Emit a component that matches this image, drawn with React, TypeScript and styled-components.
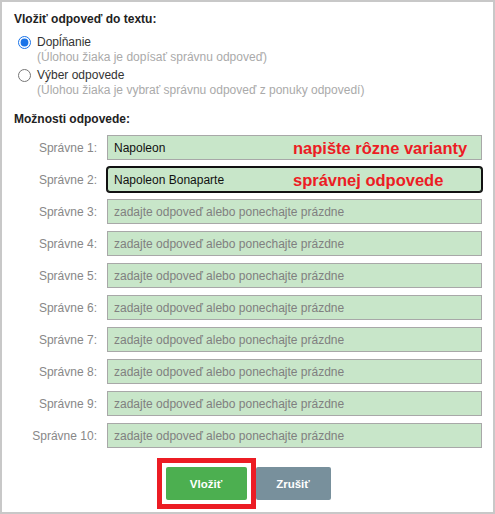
import React from "react";
import styled, { createGlobalStyle } from "styled-components";

const GlobalStyle = createGlobalStyle`
  html, body {
    margin: 0;
    padding: 0;
    background: #fff;
  }
  body {
    font-family: "Liberation Sans", Arial, sans-serif;
    font-size: 12px;
    color: #333;
  }
  * {
    box-sizing: border-box;
  }
`;

const Frame = styled.div`
  width: 495px;
  height: 514px;
  border: 2px solid #c8c8c8;
  padding: 10px 11px 0 12px;
  display: flex;
  flex-direction: column;
`;

const Heading = styled.div<{ $gap?: number }>`
  font-weight: bold;
  font-size: 12px;
  line-height: 15px;
  color: #222;
  margin-bottom: ${(p) => p.$gap ?? 8}px;
`;

const Option = styled.label`
  display: flex;
  align-items: flex-start;
  gap: 6px;
  padding-left: 4px;
  margin-bottom: 3px;
  cursor: pointer;

  input {
    width: 13px;
    height: 13px;
    margin: 1px 0 0 0;
    accent-color: #1a73e8;
  }
`;

const OptionText = styled.div`
  display: flex;
  flex-direction: column;
  line-height: 15px;
`;

const OptionTitle = styled.span`
  color: #333;
`;

const OptionHint = styled.span`
  color: #aaa;
`;

const Section = styled.div`
  margin-top: 11px;
`;

const Rows = styled.div`
  display: flex;
  flex-direction: column;
  gap: 7px;
`;

const Row = styled.div`
  display: grid;
  grid-template-columns: 83px 1fr;
  column-gap: 10px;
  align-items: center;
`;

const RowLabel = styled.span`
  text-align: right;
  color: #888;
`;

const Field = styled.div`
  position: relative;
`;

const Input = styled.input<{ $focused?: boolean }>`
  width: 100%;
  height: 25px;
  padding: 0 6px;
  background: #c8e6c9;
  border: 1px solid ${(p) => (p.$focused ? "#111" : "#a8a8a8")};
  border-radius: ${(p) => (p.$focused ? "3px" : "0")};
  box-shadow: ${(p) => (p.$focused ? "0 0 0 1px #111" : "none")};
  font-family: "Liberation Sans", Arial, sans-serif;
  font-size: 12px;
  color: #111;
  outline: none;

  &::placeholder {
    color: #808080;
  }
`;

const Note = styled.span`
  position: absolute;
  left: 186px;
  top: 50%;
  transform: translateY(-50%);
  color: #ec1c24;
  font-weight: bold;
  font-size: 16.5px;
  pointer-events: none;
  white-space: nowrap;
`;

const Buttons = styled.div`
  display: flex;
  justify-content: center;
  gap: 9px;
  margin-top: 19px;
`;

const Button = styled.button<{ $variant: "primary" | "secondary"; $marked?: boolean }>`
  position: relative;
  z-index: ${(p) => (p.$marked ? 1 : 0)};
  height: 33px;
  width: ${(p) => (p.$variant === "primary" ? 81 : 75)}px;
  border: none;
  border-radius: 2px;
  background: ${(p) => (p.$variant === "primary" ? "#4caf50" : "#78909c")};
  color: #fff;
  font-family: "Liberation Sans", Arial, sans-serif;
  font-weight: bold;
  font-size: 11.5px;
  cursor: pointer;
  outline: none;

  &::after {
    content: "";
    display: ${(p) => (p.$marked ? "block" : "none")};
    position: absolute;
    inset: -9px;
    border: 5px solid #ec1c24;
    pointer-events: none;
  }
`;

const answers = [
  { value: "Napoleon", note: "napište rôzne varianty" },
  { value: "Napoleon Bonaparte", note: "správnej odpovede", focused: true },
];

export default function App() {
  const rows = Array.from({ length: 10 }, (_, i) => answers[i] ?? { value: "" });

  return (
    <Frame>
      <GlobalStyle />
      <Heading>Vložiť odpoveď do textu:</Heading>

      <Option>
        <input type="radio" name="mode" defaultChecked />
        <OptionText>
          <OptionTitle>Dopĺňanie</OptionTitle>
          <OptionHint>(Úlohou žiaka je dopísať správnu odpoveď)</OptionHint>
        </OptionText>
      </Option>
      <Option>
        <input type="radio" name="mode" />
        <OptionText>
          <OptionTitle>Výber odpovede</OptionTitle>
          <OptionHint>(Úlohou žiaka je vybrať správnu odpoveď z ponuky odpovedí)</OptionHint>
        </OptionText>
      </Option>

      <Section>
        <Heading $gap={8}>Možnosti odpovede:</Heading>
        <Rows>
          {rows.map((row, i) => (
            <Row key={i}>
              <RowLabel>Správne {i + 1}:</RowLabel>
              <Field>
                <Input
                  defaultValue={row.value}
                  placeholder="zadajte odpoveď alebo ponechajte prázdne"
                  $focused={"focused" in row && row.focused}
                />
                {"note" in row && row.note && <Note>{row.note}</Note>}
              </Field>
            </Row>
          ))}
        </Rows>
      </Section>

      <Buttons>
        <Button $variant="primary" $marked>
          Vložiť
        </Button>
        <Button $variant="secondary">Zrušiť</Button>
      </Buttons>
    </Frame>
  );
}
